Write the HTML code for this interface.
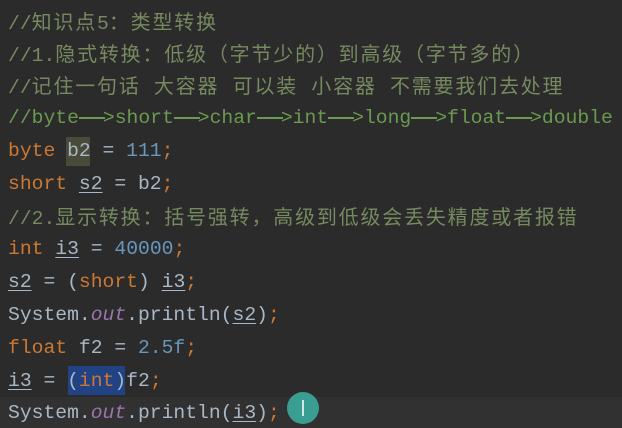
<!DOCTYPE html>
<html><head><meta charset="utf-8"><style>
html,body{margin:0;padding:0;background:#2b2b2b;width:622px;height:428px;overflow:hidden}
.w{position:relative;width:622px;height:428px}
.l{position:absolute;left:8px;height:33px;line-height:33px;white-space:pre;font-family:"Liberation Mono","Noto Sans CJK SC",monospace;font-size:19.7px;color:#a9b7c6}
.c{font-family:"Noto Sans CJK SC",sans-serif;font-size:20px;letter-spacing:1.8px}
.cm{color:#76895f}
.g{color:#6a9a4f}
.k{color:#cc7832}
.n{color:#6897bb}
.o{color:#9876aa;font-style:italic}
.u{text-decoration:underline;text-underline-offset:3px}
.a{display:inline-block;width:26px;height:2px;background:#6a9a4f;vertical-align:middle;margin-right:-2px}
</style></head><body><div class="w">
<div style="position:absolute;left:0;top:397px;width:622px;height:31px;background:#313131"></div>
<div style="position:absolute;left:66px;top:137px;width:24px;height:29px;background:#4a4a3a"></div>
<div style="position:absolute;left:68px;top:366px;width:57px;height:29px;background:#214283"></div>
<div class="l cm" style="top:4px">//<span class="c">知识点</span>5<span class="c">：类型转换</span></div>
<div class="l cm" style="top:36px">//1.<span class="c">隐式转换：低级（字节少的）到高级（字节多的）</span></div>
<div class="l cm" style="top:68px">//<span class="c" style="word-spacing:7px">记住一句话 大容器 可以装 小容器 不需要我们去处理</span></div>
<div class="l g" style="top:102px">//byte<span class="a"></span>&gt;short<span class="a"></span>&gt;char<span class="a"></span>&gt;int<span class="a"></span>&gt;long<span class="a"></span>&gt;float<span class="a"></span>&gt;double</div>
<div class="l" style="top:135px"><span class="k">byte</span> b2 = <span class="n">111</span><span class="k">;</span></div>
<div class="l" style="top:168px"><span class="k">short</span> <span class="u">s2</span> = b2<span class="k">;</span></div>
<div class="l cm" style="top:199px">//2.<span class="c">显示转换：括号强转，高级到低级会丢失精度或者报错</span></div>
<div class="l" style="top:233px"><span class="k">int</span> <span class="u">i3</span> = <span class="n">40000</span><span class="k">;</span></div>
<div class="l" style="top:266px"><span class="u">s2</span> = (<span class="k">short</span>) <span class="u">i3</span><span class="k">;</span></div>
<div class="l" style="top:299px">System.<span class="o">out</span>.println(<span class="u">s2</span>)<span class="k">;</span></div>
<div class="l" style="top:332px"><span class="k">float</span> f2 = <span class="n">2.5f</span><span class="k">;</span></div>
<div class="l" style="top:365px"><span class="u">i3</span> = (<span class="k">int</span>)f2<span class="k">;</span></div>
<div class="l" style="top:397px">System.<span class="o">out</span>.println(<span class="u">i3</span>)<span class="k">;</span></div>
<div style="position:absolute;left:287px;top:392px;width:32px;height:32px;border-radius:50%;background:#3a9d92"></div>
<div style="position:absolute;left:302px;top:400px;width:2px;height:16px;background:#cfe8e4"></div>
</div></body></html>
